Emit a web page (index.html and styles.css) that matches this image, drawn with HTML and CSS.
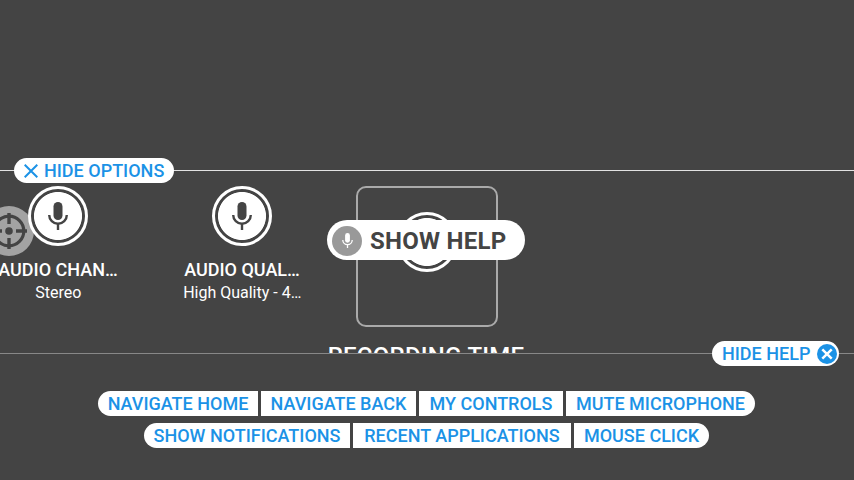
FILE: index.html
```html
<!DOCTYPE html>
<html lang="en">
<head>
<meta charset="utf-8">
<title>Recorder options</title>
<link rel="stylesheet" href="styles.css">
</head>
<body>
<svg width="0" height="0" class="defs">
  <symbol id="mic" viewBox="0 0 20 28">
    <rect x="5.5" y="0" width="9" height="18" rx="4.5" fill="currentColor"/>
    <path d="M1.2 13a8.8 8.8 0 0 0 17.6 0M10 22v6" fill="none" stroke="currentColor" stroke-width="2.4"/>
  </symbol>
</svg>
<main class="screen">
  <section class="options">
    <svg class="target" viewBox="0 0 50 50">
      <circle cx="25" cy="25" r="25" fill="#a3a3a3"/>
      <circle cx="25" cy="25" r="14.8" fill="none" stroke="#444" stroke-width="3.2"/>
      <circle cx="25" cy="25" r="3.8" fill="#444"/>
      <path d="M25 7v11M25 32v11M7 25h11M32 25h11" stroke="#444" stroke-width="3.4"/>
    </svg>
    <div class="cell">
      <div class="knob"><svg class="mic"><use href="#mic"/></svg></div>
      <div class="title">AUDIO CHAN…</div>
      <div class="value">Stereo</div>
    </div>
    <div class="cell">
      <div class="knob"><svg class="mic"><use href="#mic"/></svg></div>
      <div class="title">AUDIO QUAL…</div>
      <div class="value">High Quality - 4…</div>
    </div>
    <div class="cell focused">
      <div class="frame"><div class="knob"></div></div>
      <div class="title large">RECORDING TIME</div>
    </div>
  </section>
  <button class="pill hide-options">
    <svg viewBox="0 0 14 14" width="14" height="14"><path d="M.7 .7l12.6 12.6M13.3 .7L.7 13.3" stroke="#1b92e6" stroke-width="2"/></svg>
    <span>HIDE OPTIONS</span>
  </button>
  <div class="show-help">
    <span class="badge"><svg><use href="#mic"/></svg></span>
    <span>SHOW HELP</span>
  </div>
  <section class="help">
    <div class="row">
      <button class="w160">NAVIGATE HOME</button>
      <button class="w155">NAVIGATE BACK</button>
      <button class="w144">MY CONTROLS</button>
      <button class="w189">MUTE MICROPHONE</button>
    </div>
    <div class="row">
      <button class="w206">SHOW NOTIFICATIONS</button>
      <button class="w218">RECENT APPLICATIONS</button>
      <button class="w135">MOUSE CLICK</button>
    </div>
  </section>
  <button class="pill hide-help">
    <span>HIDE HELP</span>
    <svg viewBox="0 0 20 20" width="20" height="20"><circle cx="10" cy="10" r="10" fill="#1b92e6"/><path d="M5.3 5.3l9.4 9.4M14.7 5.3l-9.4 9.4" stroke="#fff" stroke-width="2.5"/></svg>
  </button>
</main>
</body>
</html>
```

FILE: styles.css
```css
* { box-sizing: border-box; }
body { margin: 0; background: #444; font-family: Roboto, sans-serif; }
button { border: 0; margin: 0; padding: 0; font: inherit; color: inherit; background: #fff; }
.defs { position: absolute; }
.screen {
  position: relative;
  width: 854px;
  height: 480px;
  padding-top: 170px;
  overflow: hidden;
  background: #444;
  color: #fff;
  white-space: nowrap;
}
.options {
  position: relative;
  display: flex;
  height: 183px;
  padding-top: 15px;
  border-top: 1px solid #e2e2e2;
  overflow: hidden;
}
.target { position: absolute; left: -16px; top: 35px; width: 50px; height: 50px; }
.cell {
  position: relative;
  flex: none;
  width: 184px;
  display: flex;
  flex-direction: column;
  align-items: center;
}
.cell:first-of-type { margin-left: -34px; }
.focused { width: 186px; }
.knob {
  flex: none;
  display: flex;
  align-items: center;
  justify-content: center;
  width: 60px;
  height: 60px;
  border: 3px solid #fff;
  border-radius: 50%;
  background: radial-gradient(circle, #fff 23.6px, #444 24.4px);
}
.mic { width: 20px; height: 28px; color: #444; }
.title { flex: none; margin-top: 13px; font-size: 18px; font-weight: 500; line-height: 22px; }
.value { margin: 1px 0 0 0.5px; font-size: 16px; line-height: 22px; }
.frame {
  flex: none;
  display: flex;
  justify-content: center;
  width: 142px;
  height: 141px;
  padding-top: 24px;
  border: 2px solid #aaa;
  border-radius: 10px;
}
.large { font-size: 24px; line-height: 28px; margin: 15px 2px 0 0; letter-spacing: 0.25px; }
.pill {
  position: absolute;
  display: flex;
  align-items: center;
  height: 25px;
  border-radius: 13px;
  color: #1b92e6;
  font-size: 18px;
  font-weight: 500;
}
.hide-options { left: 14px; top: 158px; width: 160px; padding-left: 10px; gap: 6px; }
.hide-help { left: 712px; top: 341px; width: 127px; padding: 0 2px 0 10px; justify-content: space-between; }
.show-help {
  position: absolute;
  left: 327px;
  top: 220px;
  width: 198px;
  height: 40px;
  display: flex;
  align-items: center;
  gap: 8px;
  padding: 1px 0 0 5px;
  border-radius: 20px;
  background: #fff;
  color: #444;
  font-size: 24px;
  font-weight: 700;
  letter-spacing: 0.25px;
}
.badge {
  display: flex;
  align-items: center;
  justify-content: center;
  width: 30px;
  height: 30px;
  border-radius: 50%;
  background: #999;
  color: #fff;
}
.badge svg { width: 11px; height: 15px; }
.help {
  height: 127px;
  padding: 37px 1px 0 0;
  border-top: 1px solid #888;
  display: flex;
  flex-direction: column;
  align-items: center;
  gap: 7px;
}
.row { display: flex; gap: 3px; }
.row button { height: 25px; color: #1b92e6; font-size: 18px; font-weight: 500; line-height: 25px; }
.row button:first-child { border-radius: 13px 0 0 13px; }
.row button:last-child { border-radius: 0 13px 13px 0; }
.w160 { width: 160px; }
.w155 { width: 155px; }
.w144 { width: 144px; }
.w189 { width: 189px; }
.w206 { width: 206px; }
.w218 { width: 218px; }
.w135 { width: 135px; }
```
